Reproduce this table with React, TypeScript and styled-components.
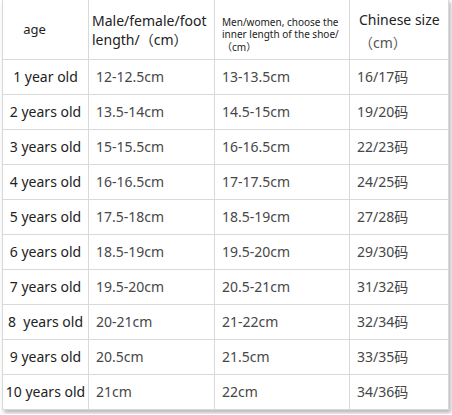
import styled, { createGlobalStyle } from 'styled-components'

const GlobalStyle = createGlobalStyle`
  html, body {
    margin: 0;
    padding: 0;
    background: #ffffff;
  }
  body {
    font-family: 'Noto Sans', 'Noto Sans CJK SC', sans-serif;
  }
`

const Page = styled.div`
  width: 452px;
  height: 415px;
  padding: 0 0 0 2px;
  box-sizing: border-box;
  background: #fff;
`

const Table = styled.table`
  width: 446px;
  table-layout: fixed;
  border-collapse: collapse;
  background: #fff;
  box-shadow: 2px 3px 4px rgba(0, 0, 0, 0.28);
  margin-top: -1px;
`

const HeadRow = styled.tr`
  height: 60px;
`

const Row = styled.tr`
  height: 35px;
`

const Cell = styled.td<{ $first?: boolean }>`
  box-sizing: border-box;
  border: 1px solid #d9d9d9;
  padding: 0 0 0 ${({ $first }) => ($first ? '0' : '7px')};
  text-align: ${({ $first }) => ($first ? 'center' : 'left')};
  vertical-align: middle;
  white-space: pre;
  font-size: 14px;
  line-height: 18px;
  color: ${({ $first }) => ($first ? '#222' : '#474747')};
  overflow: visible;
`

const HeadCell = styled.th<{ $small?: boolean }>`
  box-sizing: border-box;
  border: 1px solid #d9d9d9;
  padding: ${({ $small }) => ($small ? '10px 0 0 7px' : '0 0 0 3px')};
  text-align: left;
  vertical-align: middle;
  font-weight: 400;
  font-size: ${({ $small }) => ($small ? '10px' : '14px')};
  line-height: ${({ $small }) => ($small ? '12.5px' : '19px')};
  color: #222;
`

const AgeHead = styled(HeadCell)`
  text-align: center;
  padding: 0 22px 0 0;
  font-size: 13px;
`

const SizeHead = styled(HeadCell)`
  padding: 3px 0 0 9px;
  line-height: 23px;
`

const Paren = styled.span`
  color: #555;
`

const rows: [string, string, string, string][] = [
  ['1 year old', '12-12.5cm', '13-13.5cm', '16/17码'],
  ['2 years old', '13.5-14cm', '14.5-15cm', '19/20码'],
  ['3 years old', '15-15.5cm', '16-16.5cm', '22/23码'],
  ['4 years old', '16-16.5cm', '17-17.5cm', '24/25码'],
  ['5 years old', '17.5-18cm', '18.5-19cm', '27/28码'],
  ['6 years old', '18.5-19cm', '19.5-20cm', '29/30码'],
  ['7 years old', '19.5-20cm', '20.5-21cm', '31/32码'],
  ['8  years old', '20-21cm', '21-22cm', '32/34码'],
  ['9 years old', '20.5cm', '21.5cm', '33/35码'],
  ['10 years old', '21cm', '22cm', '34/36码'],
]

export default function App() {
  return (
    <>
      <GlobalStyle />
      <Page>
        <Table>
          <colgroup>
            <col style={{ width: 86 }} />
            <col style={{ width: 126 }} />
            <col style={{ width: 135 }} />
            <col style={{ width: 99 }} />
          </colgroup>
          <thead>
            <HeadRow>
              <AgeHead>age</AgeHead>
              <HeadCell>
                Male/female/foot
                <br />
                length/（cm）
              </HeadCell>
              <HeadCell $small>
                Men/women, choose the
                <br />
                inner length of the shoe/
                <br />
                （cm）
              </HeadCell>
              <SizeHead>
                Chinese size
                <br />
                <Paren>（cm）</Paren>
              </SizeHead>
            </HeadRow>
          </thead>
          <tbody>
            {rows.map(([age, foot, inner, size]) => (
              <Row key={age}>
                <Cell $first>{age}</Cell>
                <Cell>{foot}</Cell>
                <Cell>{inner}</Cell>
                <Cell>{size}</Cell>
              </Row>
            ))}
          </tbody>
        </Table>
      </Page>
    </>
  )
}
